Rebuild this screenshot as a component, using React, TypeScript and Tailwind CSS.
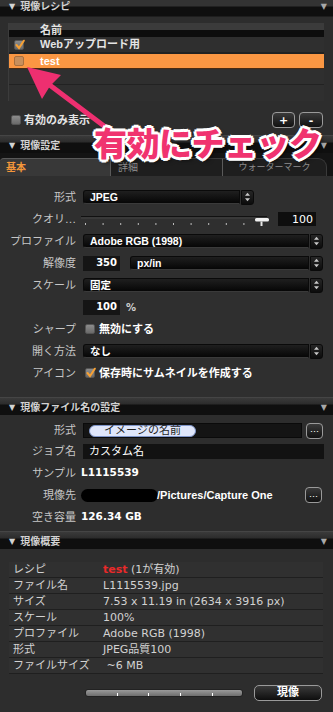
import React from 'react';

const font = "font-['DejaVu_Sans','Noto_Sans_CJK_JP',sans-serif]";
const boldFont = "font-['Liberation_Sans','Noto_Sans_CJK_JP',sans-serif] font-bold";

function SectionHeader({ title, first }: { title: string; first?: boolean }) {
  return (
    <div
      className={`shrink-0 flex items-center pl-[9px] pr-[6px] text-[#d2d2d2] ${
        first
          ? 'h-[18px] pb-[5px] bg-[linear-gradient(to_bottom,#333_0px,#333_6px,#0f0f0f_7px,#0f0f0f_16px,#2d2d2d_17px)]'
          : 'h-[18px] pt-[2px] border-t border-[#454545] bg-[linear-gradient(to_bottom,#3a3a3a_0px,#2c2c2c_6px,#0f0f0f_7px,#0f0f0f_100%)]'
      }`}
    >
      <span className="text-[8px] leading-none">▼</span>
      <span className={`ml-[5px] text-[10px] leading-none ${boldFont}`}>{title}</span>
      <span className="ml-auto text-[8px] leading-none text-[#a8a8a8]">▼</span>
    </div>
  );
}

function Checkbox({ checked, tint }: { checked?: boolean; tint?: boolean }) {
  return (
    <div
      className={`relative w-[10px] h-[10px] rounded-[2px] shrink-0 ${
        tint
          ? 'bg-[#c98f5c] border border-[#a8703f]'
          : 'bg-[linear-gradient(to_bottom,#8c8c8c,#6a6a6a)] border border-[#555]'
      }`}
    >
      {checked && (
        <svg viewBox="0 0 10 10" className="absolute left-[0px] top-[-2px] w-[10px] h-[11px]">
          <path d="M1.5 5.5 L4 8.5 L8.8 1.2" fill="none" stroke="#f7a134" strokeWidth="2" strokeLinecap="round" />
        </svg>
      )}
    </div>
  );
}

function Stepper() {
  return (
    <div className="ml-[1px] w-[13px] h-[15px] rounded-r-[3px] bg-[linear-gradient(to_bottom,#262626,#0c0c0c)] border border-[#0a0a0a] flex items-center justify-center">
      <svg viewBox="0 0 8 12" className="w-[7px] h-[10px]">
        <path d="M4 1 L7 4.5 L1 4.5 Z" fill="#c8c8c8" />
        <path d="M4 11 L7 7.5 L1 7.5 Z" fill="#c8c8c8" />
      </svg>
    </div>
  );
}

function Select({ value, width }: { value: string; width: string }) {
  return (
    <div className={`flex items-center ${width}`}>
      <div className={`flex-1 h-[14px] rounded-l-[3px] bg-[linear-gradient(to_bottom,#1f1f1f,#060606)] border border-[#0a0a0a] border-b-[#3a3a3a] flex items-center pl-[6px] text-[10.5px] text-white leading-none ${boldFont}`}>
        {value}
      </div>
      <Stepper />
    </div>
  );
}

function Row({ label, children, h = 'h-[22px]', gap = 'ml-[7px]' }: { label: string; children?: React.ReactNode; h?: string; gap?: string }) {
  return (
    <div className={`flex items-center ${h}`}>
      <div className="w-[76px] shrink-0 text-right text-[11px] text-[#c6c6c6] leading-none">{label}</div>
      <div className={`${gap} flex items-center`}>{children}</div>
    </div>
  );
}

function DotsButton() {
  return (
    <div className="w-[17px] h-[16px] rounded-[4px] border border-[#9a9a9a] bg-[linear-gradient(to_bottom,#3a3a3a,#111)] flex items-center justify-center text-[9px] text-white leading-none pb-[2px]">
      …
    </div>
  );
}

function Slider() {
  const ticks = Array.from({ length: 11 }, (_, i) => 6 + i * 17.6);
  return (
    <svg width="190" height="22" viewBox="0 0 190 22" className="block">
      <rect x="2" y="8" width="186" height="1.5" fill="#111" />
      <rect x="2" y="9.5" width="186" height="0.8" fill="#555" />
      {ticks.map((t) => (
        <rect key={t} x={t} y="15" width="1" height="2" fill="#bdbdbd" />
      ))}
      <rect x="176" y="10" width="14" height="3.5" rx="1.5" fill="#f2f2f2" />
      <rect x="181.5" y="13.5" width="2" height="4.5" fill="#e6e6e6" />
    </svg>
  );
}

function ListRow({ children, className = '' }: { children?: React.ReactNode; className?: string }) {
  return <div className={`h-[16px] flex items-center border-b border-[#222] ${className}`}>{children}</div>;
}

const summary: [string, React.ReactNode][] = [
  ['レシピ', <><span className="text-[#ea2a2a] font-bold">test</span> (1が有効)</>],
  ['ファイル名', 'L1115539.jpg'],
  ['サイズ', '7.53 x 11.19 in (2634 x 3916 px)'],
  ['スケール', '100%'],
  ['プロファイル', 'Adobe RGB (1998)'],
  ['形式', 'JPEG品質100'],
  ['ファイルサイズ', ' ~6 MB'],
];

export default function App() {
  return (
    <div className={`relative w-[333px] h-[712px] overflow-hidden bg-[#2d2d2d] flex flex-col ${font}`}>
      {/* 現像レシピ */}
      <SectionHeader title="現像レシピ" first />
      <div className="h-[117px] shrink-0 pt-[5px] flex flex-col">
        <div className="ml-[8px] w-[316px] border-l border-[#3c3c3c] bg-[#2f2f2f]">
          <div className={`h-[14px] bg-[linear-gradient(to_bottom,#3b3b3b_0,#3b3b3b_50%,#0d0d0d_50%,#0d0d0d_100%)] pl-[31px] text-[11px] text-[#e2e2e2] leading-[15px] ${boldFont}`}>
            名前
          </div>
          <ListRow>
            <div className="ml-[5px]">
              <Checkbox checked />
            </div>
            <span className={`ml-[16px] text-[11px] text-[#e4e4e4] ${boldFont}`}>Webアップロード用</span>
          </ListRow>
          <ListRow className="bg-[#fb9743] border-t border-[#4a2a10] border-b-[#4a2a10]">
            <div className="ml-[5px]">
              <Checkbox tint />
            </div>
            <span className={`ml-[16px] text-[11px] text-white ${boldFont}`}>test</span>
          </ListRow>
          <ListRow />
          <ListRow className="border-b-0" />
        </div>
        <div className="mt-[11px] h-[16px] flex items-center">
          <div className="ml-[11px]">
            <Checkbox />
          </div>
          <span className={`ml-[3px] text-[11px] text-[#e4e4e4] ${boldFont}`}>有効のみ表示</span>
          <div className="ml-auto mr-[10px] flex gap-[4px]">
            <div className="w-[23px] h-[16px] rounded-[4px] border border-[#9a9a9a] bg-[linear-gradient(to_bottom,#3a3a3a,#111)] flex items-center justify-center text-[11px] font-bold text-white leading-none">+</div>
            <div className="w-[24px] h-[16px] rounded-[4px] border border-[#9a9a9a] bg-[linear-gradient(to_bottom,#3a3a3a,#111)] flex items-center justify-center text-[11px] font-bold text-white leading-none">-</div>
          </div>
        </div>
      </div>

      {/* 現像設定 */}
      <SectionHeader title="現像設定" />
      <div className="h-[23px] shrink-0 bg-[#141414] flex items-end">
        <div className={`w-[110px] h-[18px] rounded-tl-[4px] border-t border-[#5a5a5a] bg-[#383838] flex items-center pl-[6px] text-[10px] text-[#f5973a] leading-none ${boldFont}`}>基本</div>
        <div className="w-[112px] h-[18px] border-l border-[#5a5a5a] border-t border-t-[#3a3a3a] bg-[#1e1e1e] flex items-center pl-[7px] text-[10px] text-[#8e8e8e] leading-none">詳細</div>
        <div className="w-[105px] h-[18px] rounded-tr-[9px] border-l border-[#5a5a5a] border-t border-t-[#3a3a3a] border-r border-r-[#3a3a3a] bg-[#1e1e1e] flex items-center justify-center text-[9px] text-[#8e8e8e] leading-none">ウォーターマーク</div>
      </div>
      <div className="h-[221px] shrink-0 pt-[10px] bg-[#2f2f2f]">
        <Row label="形式">
          <Select value="JPEG" width="w-[171px]" />
        </Row>
        <Row label="クオリ…" gap="ml-[3px]">
          <Slider />
          <div className="ml-[9px] w-[38px] h-[14px] bg-[#0e0e0e] flex items-center justify-end pr-[3px] text-[11px] text-white leading-none">100</div>
        </Row>
        <Row label="プロファイル">
          <Select value="Adobe RGB (1998)" width="w-[240px]" />
        </Row>
        <Row label="解像度">
          <div className="w-[37px] h-[15px] bg-[#151515] flex items-center justify-end pr-[3px] text-[10px] font-bold text-white leading-none">350</div>
          <div className="ml-[10px]">
            <Select value="px/in" width="w-[193px]" />
          </div>
        </Row>
        <Row label="スケール">
          <Select value="固定" width="w-[240px]" />
        </Row>
        <Row label="">
          <div className="w-[37px] h-[15px] bg-[#151515] flex items-center justify-end pr-[3px] text-[10px] font-bold text-white leading-none">100</div>
          <span className="ml-[6px] text-[10px] font-bold text-[#d0d0d0]">%</span>
        </Row>
        <Row label="シャープ">
          <div className="ml-[2px]">
            <Checkbox />
          </div>
          <span className={`ml-[4px] text-[11px] text-white ${boldFont}`}>無効にする</span>
        </Row>
        <Row label="開く方法">
          <Select value="なし" width="w-[240px]" />
        </Row>
        <Row label="アイコン">
          <div className="ml-[2px]">
            <Checkbox checked />
          </div>
          <span className={`ml-[4px] text-[11px] text-white ${boldFont}`}>保存時にサムネイルを作成する</span>
        </Row>
      </div>

      {/* 現像ファイル名の設定 */}
      <SectionHeader title="現像ファイル名の設定" />
      <div className="h-[116px] shrink-0 pt-[5px]">
        <Row label="形式" h="h-[21px]">
          <div className="w-[219px] h-[15px] bg-[#141414] border border-[#0a0a0a] flex items-center pl-[5px]">
            <div className="w-[107px] h-[12px] rounded-full bg-[#dfe6fa] border border-[#7f95c9] flex items-center justify-center text-[11px] text-[#1e1e1e] leading-none">イメージの名前</div>
          </div>
          <div className="ml-[4px]">
            <DotsButton />
          </div>
        </Row>
        <Row label="ジョブ名" h="h-[21px]">
          <div className="w-[241px] h-[15px] bg-[#121212] flex items-center pl-[6px] text-[11px] text-white leading-none">カスタム名</div>
        </Row>
        <Row label="サンプル" gap="ml-[5px]">
          <span className="text-[10.5px] font-bold text-white">L1115539</span>
        </Row>
        <Row label="現像先" gap="ml-[5px]">
          <div className="w-[77px] h-[13px] rounded-full bg-black" />
          <span className={`ml-[-1px] w-[148px] text-[11px] text-white ${boldFont}`}>/Pictures/Capture One</span>
          <DotsButton />
        </Row>
        <Row label="空き容量" gap="ml-[5px]">
          <span className="text-[10.5px] font-bold text-white">126.34 GB</span>
        </Row>
      </div>

      {/* 現像概要 */}
      <SectionHeader title="現像概要" />
      <div className="flex-1 pt-[13px]">
        <div className="ml-[9px] w-[314px] bg-[#303030]">
          {summary.map(([k, v]) => (
            <div key={k} className="h-[16px] flex items-center border-b border-[#1f1f1f] text-[11px] text-[#d2d2d2] leading-none">
              <div className="w-[94px] pl-[4px] shrink-0">{k}</div>
              <div className="whitespace-pre">{v}</div>
            </div>
          ))}
        </div>
        <div className="mt-[11px] h-[15px] flex items-center pl-[85px]">
          <div className="w-[158px] h-[8px] rounded-[3px] border border-[#222] bg-[linear-gradient(to_bottom,#9a9a9a,#6e6e6e)] flex items-end">
            <div className="ml-[31px] w-[1px] h-[3px] bg-white" />
            <div className="ml-[30px] w-[1px] h-[3px] bg-white" />
            <div className="ml-[31px] w-[1px] h-[3px] bg-white" />
            <div className="ml-[31px] w-[1px] h-[3px] bg-white" />
          </div>
          <div className={`ml-[11px] w-[68px] h-[16px] rounded-[5px] border border-[#9a9a9a] bg-[linear-gradient(to_bottom,#3a3a3a,#0e0e0e)] flex items-center justify-center text-[11px] text-white leading-none ${boldFont}`}>
            現像
          </div>
        </div>
      </div>

      {/* annotation overlay */}
      <svg className="absolute left-0 top-0 pointer-events-none" width="333" height="712" viewBox="0 0 333 712">
        <line x1="47" y1="83" x2="108" y2="129" stroke="#ee2f70" strokeWidth="5" strokeLinecap="round" />
        <path d="M27 67 L61 75 L50 86 L42 99 Z" fill="#ee2f70" />
      </svg>
      <div className="absolute left-[94px] top-[126px] text-[33px] font-black leading-none tracking-[-0.5px] text-[#f0336f] font-['Noto_Sans_CJK_JP',sans-serif] [text-shadow:3px_0_0_#fff,-3px_0_0_#fff,0_3px_0_#fff,0_-3px_0_#fff,2px_2px_0_#fff,-2px_-2px_0_#fff,2px_-2px_0_#fff,-2px_2px_0_#fff,3px_3px_4px_rgba(0,0,0,0.6)]">
        有効にチェック
      </div>
    </div>
  );
}
